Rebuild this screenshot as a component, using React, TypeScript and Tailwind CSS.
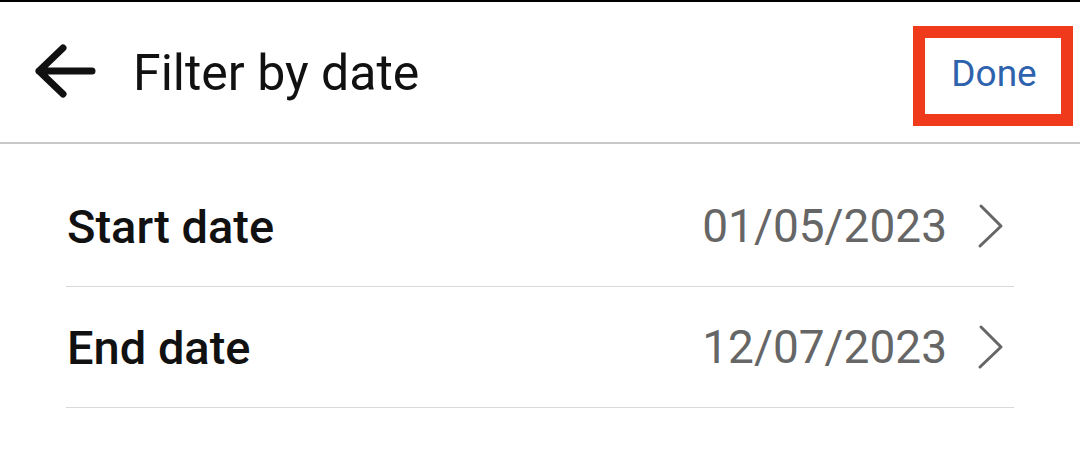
import React from "react";

const rows = [
  { label: "Start date", value: "01/05/2023" },
  { label: "End date", value: "12/07/2023" },
];

function BackArrow() {
  return (
    <svg width="62" height="58" viewBox="0 0 62 58" fill="none">
      <path
        d="M58 28H5M29 5L5 28L29 51"
        stroke="#111"
        strokeWidth="7"
        strokeLinecap="round"
        strokeLinejoin="round"
      />
    </svg>
  );
}

function Chevron() {
  return (
    <svg width="28" height="46" viewBox="0 0 28 46" fill="none">
      <polyline
        points="4,3 24,23 3,43"
        stroke="#666"
        strokeWidth="3"
        strokeLinecap="round"
        strokeLinejoin="round"
      />
    </svg>
  );
}

export default function App() {
  return (
    <div
      className="w-[1080px] h-[463px] bg-white border-t-2 border-black overflow-hidden"
      style={{ fontFamily: "Roboto, 'Noto Sans', sans-serif" }}
    >
      {/* header */}
      <header className="h-[142px] flex items-center pl-[34px] pr-[7px] border-b-2 border-[#c8c8c8]">
        <BackArrow />
        <h1 className="ml-[37px] mt-[2px] text-[50px] leading-none text-[#111] font-normal">
          Filter by date
        </h1>
        <div className="ml-auto mt-[8px] w-[160px] h-[100px] border-[12px] border-[#ef3a1b] flex items-center justify-center pb-[6px] pl-[2px]">
          <span className="text-[37px] leading-none text-[#2f62ad]">Done</span>
        </div>
      </header>

      {/* date rows */}
      <div className="pt-[22px] px-[66px]">
        {rows.map((r) => (
          <div
            key={r.label}
            className="h-[121px] flex items-center border-b border-[#d9d9d9] pl-[1px] pr-[9px]"
          >
            <span className="text-[47px] leading-none font-medium text-[#111]">
              {r.label}
            </span>
            <span className="ml-auto text-[46px] leading-none text-[#666]">
              {r.value}
            </span>
            <span className="ml-[30px] flex">
              <Chevron />
            </span>
          </div>
        ))}
      </div>
    </div>
  );
}
